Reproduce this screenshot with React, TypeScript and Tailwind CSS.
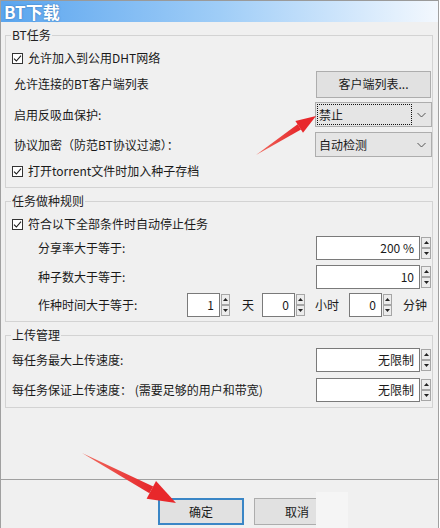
import React from "react";

function Check() {
  return (
    <span className="flex h-[11px] w-[11px] shrink-0 items-center justify-center border border-[#333] bg-white">
      <svg width="9" height="9" viewBox="0 0 9 9">
        <path d="M1 4.6 L3.4 7 L8 1.6" fill="none" stroke="#1a1a1a" strokeWidth="1.1" />
      </svg>
    </span>
  );
}

function Spin({ small }: { small?: boolean }) {
  const box = small
    ? "flex h-[11px] w-[9px] items-center justify-center border border-[#a6a6a6] bg-[#ececec]"
    : "flex h-[11px] w-[10px] items-center justify-center border border-[#a6a6a6] bg-[#ececec]";
  return (
    <div className="flex h-[22px] flex-col justify-between">
      <div className={box}>
        <svg width="5" height="3" viewBox="0 0 5 3">
          <path d="M0 3 L2.5 0 L5 3Z" fill="#222" />
        </svg>
      </div>
      <div className={box}>
        <svg width="5" height="3" viewBox="0 0 5 3">
          <path d="M0 0 L2.5 3 L5 0Z" fill="#222" />
        </svg>
      </div>
    </div>
  );
}

function NumBox({ cls, v }: { cls: string; v: string }) {
  return (
    <div className={cls}>
      <span className="leading-[16px]">{v}</span>
    </div>
  );
}

const wideBox =
  "flex h-[24px] w-[104px] items-center justify-end border border-[#7a7a7a] bg-white pr-[5px]";
const smallBox =
  "flex h-[24px] w-[33px] items-center justify-end border border-[#7a7a7a] bg-white pr-[5px]";

function Chevron() {
  return (
    <svg width="9" height="6" viewBox="0 0 9 6" className="mr-[5px]">
      <path d="M0.5 1 L4.5 5 L8.5 1" fill="none" stroke="#555" strokeWidth="1" />
    </svg>
  );
}

export default function App() {
  return (
    <div className="relative flex h-[528px] w-[439px] flex-col overflow-hidden border-x border-[#a0a0a0] bg-[#f0f0f0] font-['Noto_Sans_CJK_SC','Microsoft_YaHei',sans-serif] text-[12px] text-[#1a1a1a]">
      {/* Title bar */}
      <div className="flex h-[22px] items-center border-t border-[#9a9a9a] bg-linear-to-r from-[#5aa5ee] via-[#9fcdf7] to-[#f3f8fe] pl-[3px]">
        <span className="text-[17px] leading-[20px] font-bold text-white [text-shadow:0_0_2px_#2f6fb0]">
          BT下载
        </span>
      </div>

      {/* Group 1 */}
      <fieldset className="mx-[4px] mr-[5px] mt-[5px] border border-[#d3d3d3] pb-[4px]">
        <legend className="ml-[5px] px-[1px] leading-[16px] text-[#222]">BT任务</legend>
        <div className="mt-[3px] flex h-[24px] items-center gap-[5px] pl-[6px]">
          <Check />
          <span>允许加入到公用DHT网络</span>
        </div>
        <div className="flex h-[28px] items-center justify-between pl-[8px] pr-[1px]">
          <span>允许连接的BT客户端列表</span>
          <div className="flex h-[27px] w-[115px] items-center justify-center border border-[#adadad] bg-[#e1e1e1]">
            客户端列表...
          </div>
        </div>
        <div className="mt-[4px] flex h-[25px] items-center justify-between pl-[8px]">
          <span>启用反吸血保护:</span>
          <div className="flex h-[25px] w-[117px] items-center justify-between border border-[#adadad] bg-[#e5e5e5] pl-[1px]">
            <div className="flex h-[21px] w-[95px] items-center border border-dotted border-[#111] pl-[1px]">
              禁止
            </div>
            <Chevron />
          </div>
        </div>
        <div className="mt-[5px] flex h-[25px] items-center justify-between pl-[8px]">
          <span>协议加密（防范BT协议过滤）：</span>
          <div className="flex h-[25px] w-[117px] items-center justify-between border border-[#adadad] bg-[#e5e5e5] pl-[3px]">
            <span>自动检测</span>
            <Chevron />
          </div>
        </div>
        <div className="mt-[2px] flex h-[24px] items-center gap-[5px] pl-[6px]">
          <Check />
          <span>打开torrent文件时加入种子存档</span>
        </div>
      </fieldset>

      {/* Group 2 */}
      <fieldset className="mx-[4px] mr-[5px] mt-[5px] border border-[#d3d3d3] pb-[4px]">
        <legend className="ml-[5px] px-[1px] leading-[16px] text-[#222]">任务做种规则</legend>
        <div className="mt-[3px] flex h-[24px] items-center gap-[5px] pl-[6px]">
          <Check />
          <span>符合以下全部条件时自动停止任务</span>
        </div>
        <div className="flex h-[24px] items-center pl-[32px]">
          <span className="flex-1">分享率大于等于:</span>
          <NumBox cls={wideBox} v="200 %" />
          <div className="ml-[1px] mr-[1px]">
            <Spin />
          </div>
        </div>
        <div className="mt-[5px] flex h-[24px] items-center pl-[32px]">
          <span className="flex-1">种子数大于等于:</span>
          <NumBox cls={wideBox} v="10" />
          <div className="ml-[1px] mr-[1px]">
            <Spin />
          </div>
        </div>
        <div className="mt-[4px] flex h-[24px] items-center pl-[32px]">
          <span className="w-[149px]">作种时间大于等于:</span>
          <NumBox cls={smallBox} v="1" />
          <div className="ml-[1px]">
            <Spin small />
          </div>
          <span className="ml-[12px]">天</span>
          <div className="ml-[8px]">
            <NumBox cls={smallBox} v="0" />
          </div>
          <div className="ml-[1px]">
            <Spin small />
          </div>
          <span className="ml-[10px]">小时</span>
          <div className="ml-[10px]">
            <NumBox cls={smallBox} v="0" />
          </div>
          <div className="ml-[1px]">
            <Spin small />
          </div>
          <span className="ml-[11px]">分钟</span>
        </div>
      </fieldset>

      {/* Group 3 */}
      <fieldset className="mx-[4px] mr-[5px] mt-[5px] border border-[#d3d3d3] pb-[5px]">
        <legend className="ml-[5px] px-[1px] leading-[16px] text-[#222]">上传管理</legend>
        <div className="mt-[5px] flex h-[24px] items-center pl-[6px]">
          <span className="flex-1">每任务最大上传速度:</span>
          <NumBox cls={wideBox} v="无限制" />
          <div className="ml-[1px] mr-[1px]">
            <Spin />
          </div>
        </div>
        <div className="mt-[5px] flex h-[25px] items-center pl-[6px]">
          <span className="flex-1">每任务保证上传速度： (需要足够的用户和带宽)</span>
          <NumBox cls={wideBox} v="无限制" />
          <div className="ml-[1px] mr-[1px]">
            <Spin />
          </div>
        </div>
      </fieldset>

      <div className="flex-1" />

      {/* Bottom buttons */}
      <div className="flex h-[49px] shrink-0 border-t border-[#a0a0a0] pt-[18px]">
        <div className="ml-[157px] flex h-[27px] w-[86px] items-center justify-center border-2 border-[#3a86c6] bg-[#e1e1e1]">
          确定
        </div>
        <div className="ml-[10px] flex h-[27px] w-[86px] items-center justify-center border border-[#adadad] bg-[#e1e1e1]">
          取消
        </div>
      </div>

      {/* watermark-like patch over the cancel button */}
      <div className="pointer-events-none absolute left-[315px] top-[492px] h-[36px] w-[32px] bg-[#f5f5f5]" />

      {/* Red annotation arrows */}
      <svg
        className="pointer-events-none absolute left-[-1px] top-0"
        width="440"
        height="528"
        viewBox="0 0 440 528"
      >
        <defs>
          <linearGradient id="ar1" x1="0" y1="0" x2="1" y2="0">
            <stop offset="0" stopColor="#f06a5e" />
            <stop offset="1" stopColor="#e6262a" />
          </linearGradient>
        </defs>
        {/* arrow 1 */}
        <polygon points="256,155 297.6,124.2 301.0,129.6" fill="url(#ar1)" />
        <polygon points="316,116 295.4,121 303,132.8" fill="#e8282b" />
        {/* arrow 2 */}
        <polygon points="82,453 153.2,486.5 149.4,493.3" fill="url(#ar1)" />
        <polygon points="176,503 146.6,498.7 156,481.1" fill="#e8282b" />
      </svg>
    </div>
  );
}
